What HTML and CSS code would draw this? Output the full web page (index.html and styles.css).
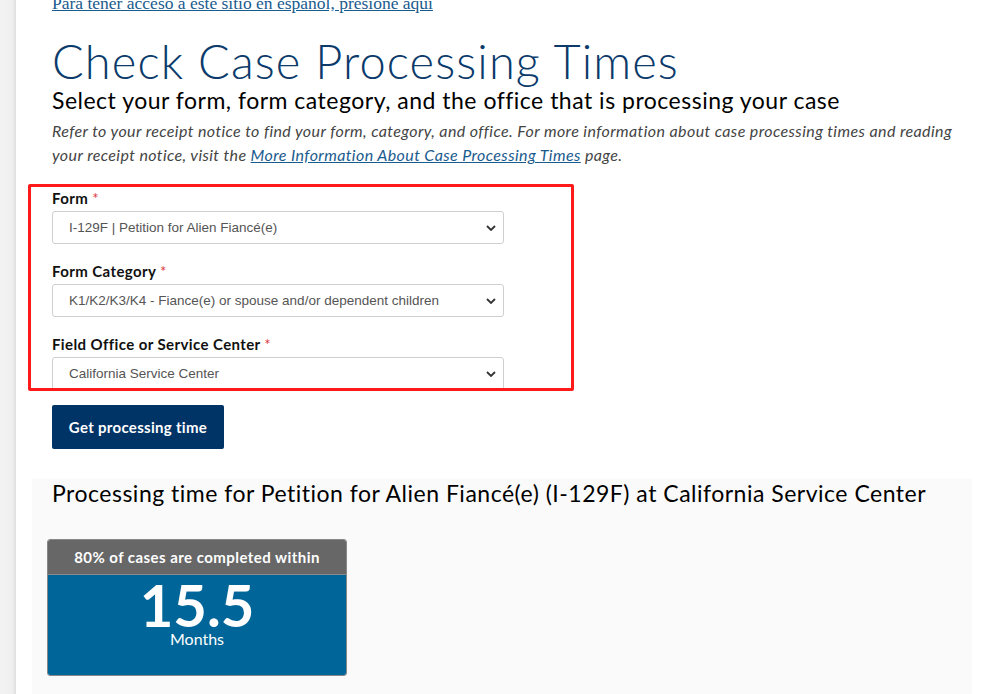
FILE: index.html
```html
<!DOCTYPE html>
<html lang="en">
<head>
<meta charset="utf-8">
<title>Check Case Processing Times</title>
<link rel="stylesheet" href="styles.css">
</head>
<body>
<div class="page">
  <aside class="side"></aside>
  <main class="main">
    <div class="content">
      <a class="es-link" href="#">Para tener acceso a este sitio en español, presione aquí</a>
      <h1 class="title">Check Case Processing Times</h1>
      <h2 class="subtitle">Select your form, form category, and the office that is processing your case</h2>
      <p class="intro">Refer to your receipt notice to find your form, category, and office. For more information about case processing times and reading your receipt notice, visit the <a href="#">More Information About Case Processing Times</a> page.</p>

      <form class="form">
        <div class="highlight"></div>
        <div class="field">
          <label class="label">Form <span class="req">*</span></label>
          <div class="select"><span>I-129F | Petition for Alien Fiancé(e)</span><svg class="chev" viewBox="0 0 10 6" width="10" height="6"><path d="M1 1l4 4 4-4" fill="none" stroke="#333" stroke-width="1.8"/></svg></div>
        </div>
        <div class="field">
          <label class="label">Form Category <span class="req">*</span></label>
          <div class="select"><span>K1/K2/K3/K4 - Fiance(e) or spouse and/or dependent children</span><svg class="chev" viewBox="0 0 10 6" width="10" height="6"><path d="M1 1l4 4 4-4" fill="none" stroke="#333" stroke-width="1.8"/></svg></div>
        </div>
        <div class="field last">
          <label class="label">Field Office or Service Center <span class="req">*</span></label>
          <div class="select"><span>California Service Center</span><svg class="chev" viewBox="0 0 10 6" width="10" height="6"><path d="M1 1l4 4 4-4" fill="none" stroke="#333" stroke-width="1.8"/></svg></div>
        </div>
        <button type="button" class="btn">Get processing time</button>
      </form>
    </div>

    <section class="results">
      <h3 class="results-title">Processing time for Petition for Alien Fiancé(e) (I-129F) at California Service Center</h3>
      <div class="card">
        <div class="card-head">80% of cases are completed within</div>
        <div class="card-body">
          <div class="num">15.5</div>
          <div class="unit">Months</div>
        </div>
      </div>
    </section>
  </main>
</div>
</body>
</html>
```

FILE: styles.css
```css
html, body {
  margin: 0;
  padding: 0;
  background: #ffffff;
  height: 100%;
  overflow: hidden;
}
.page {
  display: flex;
  min-height: 694px;
}
.side {
  width: 16px;
  flex: 0 0 16px;
  background: linear-gradient(to right, #f3f3f3 0, #efefef 12px, #e4e4e4 15px, #dcdcdc 16px);
}
.main {
  flex: 1;
  display: flex;
  flex-direction: column;
  font-family: Lato, "Open Sans", Arial, sans-serif;
}
.content {
  padding-left: 36px;
}
.es-link {
  display: block;
  margin-top: -7px;
  font-family: "Liberation Serif", "Times New Roman", serif;
  font-size: 17.5px;
  line-height: 20px;
  color: #1a5b8e;
  text-decoration: underline;
  width: max-content;
}
.title {
  margin: 23px 0 0;
  font-family: Lato, sans-serif;
  font-weight: 300;
  font-size: 47px;
  line-height: 50px;
  color: #0b3a6b;
  letter-spacing: 1.1px;
}
.subtitle {
  margin: 0;
  font-weight: 400;
  font-size: 23px;
  line-height: 28px;
  letter-spacing: 0.5px;
  color: #000;
}
.intro {
  margin: 5px 0 0;
  font-style: italic;
  font-size: 16px;
  line-height: 24px;
  letter-spacing: 0.4px;
  color: #444;
  max-width: 910px;
}
.intro a {
  color: #1a5b8e;
  text-decoration: underline;
}
.form {
  position: relative;
  margin-top: 22px;
  display: flex;
  flex-direction: column;
  align-items: flex-start;
}
.highlight {
  position: absolute;
  left: -24px;
  top: -5px;
  width: 540px;
  height: 201px;
  border: 3px solid #ff1a1a;
  border-radius: 2px;
  pointer-events: none;
  z-index: 2;
}
.field {
  margin-bottom: 18px;
}
.field.last {
  margin-bottom: 15px;
}
.label {
  display: block;
  font-weight: 700;
  font-size: 15px;
  line-height: 18px;
  letter-spacing: 0.4px;
  color: #111;
  margin-bottom: 4px;
}
.req {
  color: #d9363e;
  font-weight: 400;
}
.select {
  box-sizing: border-box;
  width: 452px;
  height: 33px;
  border: 1px solid #cfcfcf;
  border-radius: 3px;
  background: #fff;
  display: flex;
  align-items: center;
  justify-content: space-between;
  padding: 0 7px 0 16px;
  font-family: "Liberation Sans", Arial, sans-serif;
  font-size: 13.5px;
  color: #555;
}
.chev {
  display: block;
}
.btn {
  margin: 0;
  width: 172px;
  height: 44px;
  border: 0;
  border-radius: 2px;
  background: #003366;
  color: #fff;
  font-family: Lato, sans-serif;
  font-weight: 700;
  font-size: 15px;
  letter-spacing: 0.3px;
  padding: 0;
}
.results {
  margin: 30px 0 0 16px;
  width: 940px;
  flex: 1;
  background: #fafafa;
  padding: 0 0 0 15px;
  box-sizing: border-box;
}
.results-title {
  margin: 0 0 0 5px;
  font-weight: 400;
  font-size: 23px;
  line-height: 28px;
  letter-spacing: 0.5px;
  color: #000;
}
.card {
  margin-top: 32px;
  width: 298px;
  border: 1px solid #888;
  border-radius: 3px;
  overflow: hidden;
}
.card-head {
  height: 34px;
  background: #676767;
  color: #fff;
  font-weight: 700;
  font-size: 15px;
  line-height: 34px;
  letter-spacing: 0.45px;
  text-align: center;
  border-bottom: 1px solid #8a8a8a;
}
.card-body {
  height: 100px;
  background: #006699;
  color: #fff;
  text-align: center;
}
.num {
  font-weight: 700;
  font-size: 58px;
  line-height: 50px;
  padding-top: 5px;
}
.unit {
  font-size: 16px;
  line-height: 18px;
}
```
